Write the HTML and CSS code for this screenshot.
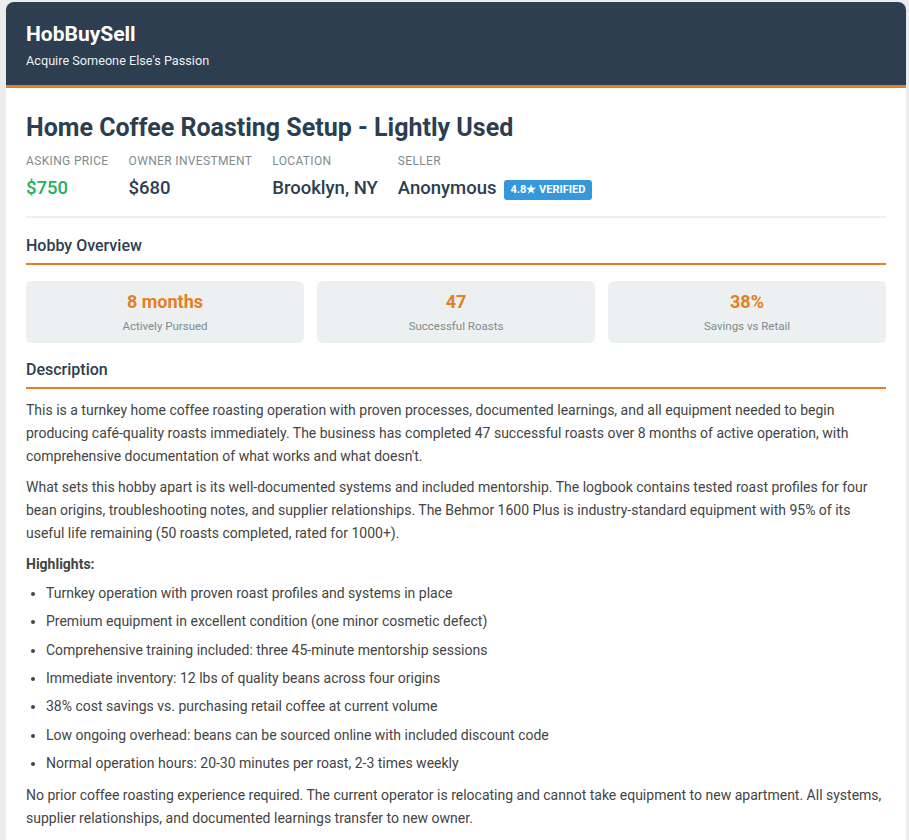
FILE: index.html
```html
<!DOCTYPE html>
<html lang="en">
<head>
<meta charset="utf-8">
<title>HobBuySell - Home Coffee Roasting Setup</title>
<link rel="stylesheet" href="styles.css">
</head>
<body>
<div class="card">
  <header class="site-header">
    <h1 class="brand">HobBuySell</h1>
    <p class="tagline">Acquire Someone Else's Passion</p>
  </header>
  <main class="content">
    <h2 class="listing-title">Home Coffee Roasting Setup - Lightly Used</h2>
    <div class="meta">
      <div class="meta-item">
        <div class="meta-label">Asking Price</div>
        <div class="meta-value price">$750</div>
      </div>
      <div class="meta-item">
        <div class="meta-label">Owner Investment</div>
        <div class="meta-value">$680</div>
      </div>
      <div class="meta-item">
        <div class="meta-label">Location</div>
        <div class="meta-value">Brooklyn, NY</div>
      </div>
      <div class="meta-item">
        <div class="meta-label">Seller</div>
        <div class="meta-value">Anonymous <span class="badge">4.8★ VERIFIED</span></div>
      </div>
    </div>

    <h3 class="section-title">Hobby Overview</h3>
    <div class="stats">
      <div class="stat">
        <div class="stat-value">8 months</div>
        <div class="stat-label">Actively Pursued</div>
      </div>
      <div class="stat">
        <div class="stat-value">47</div>
        <div class="stat-label">Successful Roasts</div>
      </div>
      <div class="stat">
        <div class="stat-value">38%</div>
        <div class="stat-label">Savings vs Retail</div>
      </div>
    </div>

    <h3 class="section-title">Description</h3>
    <div class="description">
      <p>This is a turnkey home coffee roasting operation with proven processes, documented learnings, and all equipment needed to begin producing café-quality roasts immediately. The business has completed 47 successful roasts over 8 months of active operation, with comprehensive documentation of what works and what doesn't.</p>
      <p>What sets this hobby apart is its well-documented systems and included mentorship. The logbook contains tested roast profiles for four bean origins, troubleshooting notes, and supplier relationships. The Behmor 1600 Plus is industry-standard equipment with 95% of its useful life remaining (50 roasts completed, rated for 1000+).</p>
      <p class="highlights-title"><strong>Highlights:</strong></p>
      <ul class="highlights">
        <li>Turnkey operation with proven roast profiles and systems in place</li>
        <li>Premium equipment in excellent condition (one minor cosmetic defect)</li>
        <li>Comprehensive training included: three 45-minute mentorship sessions</li>
        <li>Immediate inventory: 12 lbs of quality beans across four origins</li>
        <li>38% cost savings vs. purchasing retail coffee at current volume</li>
        <li>Low ongoing overhead: beans can be sourced online with included discount code</li>
        <li>Normal operation hours: 20-30 minutes per roast, 2-3 times weekly</li>
      </ul>
      <p>No prior coffee roasting experience required. The current operator is relocating and cannot take equipment to new apartment. All systems, supplier relationships, and documented learnings transfer to new owner.</p>
    </div>
  </main>
</div>
</body>
</html>
```
FILE: styles.css
```css
* { box-sizing: border-box; }

html, body {
  margin: 0;
  padding: 0;
  background: #ececec;
}

body {
  font-family: Roboto, "Liberation Sans", Arial, sans-serif;
  color: #444;
  padding: 2px 3px 0 6px;
}

.card {
  width: 900px;
  background: #fff;
  border-radius: 8px 8px 0 0;
  overflow: hidden;
  min-height: 850px;
}

.site-header {
  background: #2c3e50;
  color: #fff;
  padding: 20px 20px 15px;
  border-bottom: 3px solid #e67e22;
}

.brand {
  margin: 0 0 5px;
  font-size: 21px;
  line-height: 24px;
  font-weight: 700;
}

.tagline {
  margin: 0;
  font-size: 12.7px;
  line-height: 19px;
  color: #ecf0f1;
}

.content {
  padding: 25px 20px 20px;
}

.listing-title {
  margin: 0 0 10px;
  font-size: 25px;
  line-height: 30px;
  font-weight: 700;
  color: #2c3e50;
}

.meta {
  display: flex;
  gap: 20px;
  padding-bottom: 16px;
  border-bottom: 2px solid #ecf0f1;
}

.meta-label {
  font-size: 12px;
  line-height: 16px;
  text-transform: uppercase;
  color: #7f8c8d;
  letter-spacing: 0.35px;
  margin-bottom: 7px;
}

.meta-value {
  display: flex;
  align-items: center;
  font-size: 18.5px;
  line-height: 24px;
  font-weight: 500;
  color: #2c3e50;
}

.meta-value.price {
  color: #27ae60;
}

.badge {
  display: inline-block;
  margin-left: 7px;
  margin-top: 3px;
  background: #3498db;
  color: #fff;
  font-size: 11px;
  line-height: 14px;
  font-weight: 700;
  padding: 3px 7px;
  border-radius: 3px;
}

.section-title {
  margin: 16px 0 0;
  font-size: 16px;
  line-height: 24px;
  font-weight: 500;
  color: #2c3e50;
  padding-bottom: 5px;
  border-bottom: 2px solid #e67e22;
}

.stats {
  display: grid;
  grid-template-columns: repeat(3, 1fr);
  gap: 13px;
  margin-top: 16px;
}

.stat {
  background: #ecf0f1;
  border-radius: 6px;
  padding: 9px 10px 9px;
  text-align: center;
}

.stat-value {
  font-size: 18px;
  line-height: 24px;
  font-weight: 700;
  color: #e67e22;
}

.stat-label {
  margin-top: 4px;
  font-size: 11.5px;
  line-height: 16px;
  color: #7f8c8d;
}

.stats + .section-title {
  margin-top: 15px;
}

.description {
  margin-top: 10px;
  font-size: 14px;
  line-height: 23px;
}

.description p {
  margin: 0 0 8px;
}

.description .highlights-title {
  margin-bottom: 6px;
}

.description strong {
  font-weight: 700;
  color: #444;
}

.highlights {
  margin: 0 0 9px;
  padding-left: 20px;
}

.highlights li {
  margin-bottom: 5.33px;
}

.highlights li:last-child {
  margin-bottom: 0;
}
```
